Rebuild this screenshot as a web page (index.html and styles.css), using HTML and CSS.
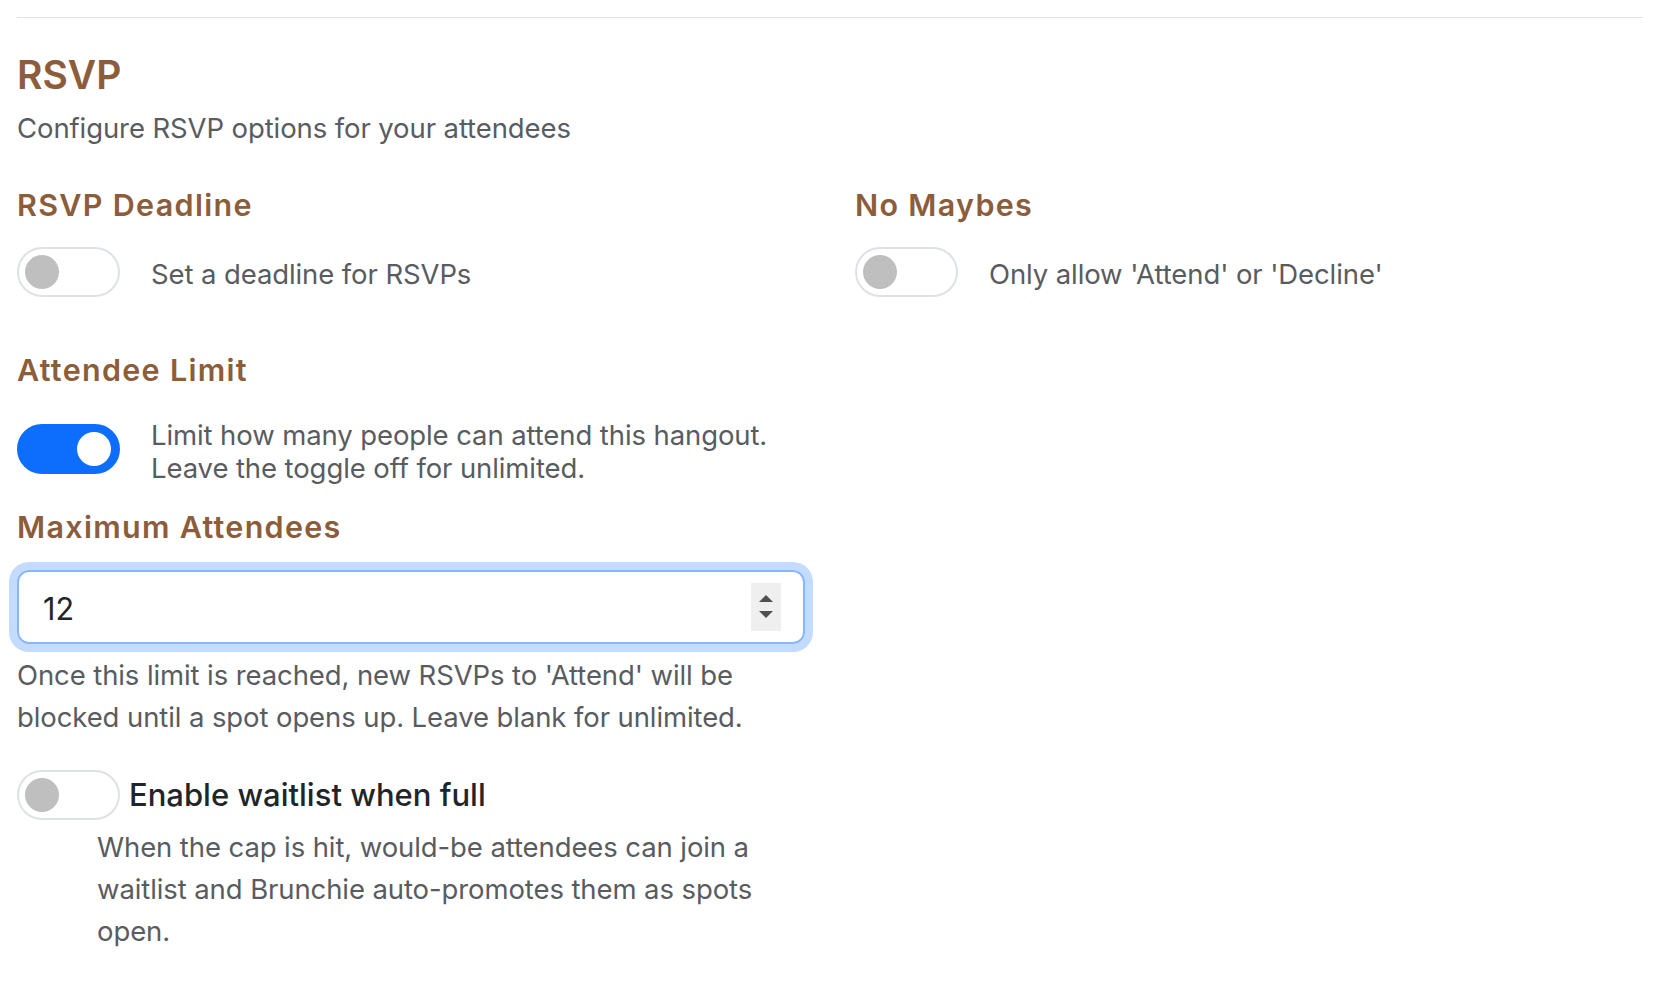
FILE: index.html
```html
<!DOCTYPE html>
<html lang="en">
<head>
  <meta charset="UTF-8">
  <title>RSVP Settings</title>
  <link rel="stylesheet" href="styles.css">
</head>
<body>
  <div class="page">
    <!-- SECTION RSVP -->
    <section class="rsvp-section">
      <h2 class="section-title">RSVP</h2>
      <p class="section-sub">Configure RSVP options for your attendees</p>

      <div class="options-grid">
        <div class="option">
          <h3 class="option-title">RSVP Deadline</h3>
          <div class="switch-row">
            <label class="switch">
              <input type="checkbox">
              <span class="slider"></span>
            </label>
            <span class="switch-text">Set a deadline for RSVPs</span>
          </div>
        </div>

        <div class="option">
          <h3 class="option-title">No Maybes</h3>
          <div class="switch-row">
            <label class="switch">
              <input type="checkbox">
              <span class="slider"></span>
            </label>
            <span class="switch-text">Only allow 'Attend' or 'Decline'</span>
          </div>
        </div>

        <!-- Attendee limit -->
        <div class="option option-limit">
          <h3 class="option-title">Attendee Limit</h3>
          <div class="switch-row switch-row-tall">
            <label class="switch">
              <input type="checkbox" checked>
              <span class="slider"></span>
            </label>
            <span class="switch-text">Limit how many people can attend this hangout. Leave the toggle off for unlimited.</span>
          </div>

          <h3 class="option-title max-title">Maximum Attendees</h3>
          <div class="number-field">
            <span class="number-value">12</span>
            <span class="spinner">
              <i class="spin-up"></i>
              <i class="spin-down"></i>
            </span>
          </div>
          <p class="field-help">Once this limit is reached, new RSVPs to 'Attend' will be blocked until a spot opens up. Leave blank for unlimited.</p>

          <div class="waitlist">
            <div class="waitlist-head">
              <label class="switch">
                <input type="checkbox">
                <span class="slider"></span>
              </label>
              <span class="waitlist-label">Enable waitlist when full</span>
            </div>
            <p class="waitlist-help">When the cap is hit, would-be attendees can join a waitlist and Brunchie auto-promotes them as spots open.</p>
          </div>
        </div>
      </div>
    </section>
    <!-- END SECTION -->
  </div>
</body>
</html>
```

FILE: styles.css
```css
body {
  margin: 0;
  font-family: Inter, "Noto Sans", Arial, sans-serif;
  background-color: #fff;
  color: #212529;
}

.page {
  padding: 17px 17px 0;
}

.rsvp-section {
  border-top: 1px solid #dee2e6;
}

.section-title {
  margin: 34px 0 0;
  font-size: 39px;
  line-height: 1.2;
  font-weight: 600;
  color: #8c5d3b;
}

.section-sub {
  margin: 9px 0 0;
  font-size: 27.5px;
  line-height: 1.5;
  letter-spacing: -0.1px;
  color: #595c5f;
}

.options-grid {
  margin-top: 38px;
  display: grid;
  grid-template-columns: 1fr 1fr;
  column-gap: 50px;
}

.option-title {
  margin: 0;
  font-size: 30.5px;
  line-height: 1.2;
  font-weight: 600;
  letter-spacing: 1.3px;
  color: #8c5d3b;
}

.switch-row {
  margin-top: 23px;
  display: flex;
  align-items: flex-start;
  gap: 31px;
}

.switch-text {
  margin-top: 7px;
  font-size: 27.5px;
  line-height: 1.5;
  letter-spacing: -0.1px;
  color: #595c5f;
}

/* Toggle switch */
.switch {
  display: block;
  flex: none;
}

.switch input {
  opacity: 0;
  width: 0;
  height: 0;
  margin: 0;
  position: absolute;
}

.slider {
  position: relative;
  display: block;
  box-sizing: border-box;
  width: 103px;
  height: 50px;
  border: 2px solid #dee2e6;
  border-radius: 25px;
  background-color: #fff;
}

.slider:before {
  position: absolute;
  content: "";
  width: 34px;
  height: 34px;
  left: 6px;
  top: 6px;
  border-radius: 50%;
  background-color: #bfbfbf;
}

input:checked + .slider {
  background-color: #0d6efd;
  border-color: #0d6efd;
}

input:checked + .slider:before {
  background-color: #fff;
  transform: translateX(52px);
}

/* Attendee limit */
.option-limit {
  grid-column: 1;
  margin-top: 55px;
}

.switch-row-tall {
  margin-top: 31px;
}

.switch-row-tall .switch {
  margin-top: 5px;
}

.switch-row-tall .switch-text {
  margin-top: 0;
  line-height: 33px;
}

.max-title {
  margin-top: 24px;
}

.number-field {
  margin-top: 24px;
  display: flex;
  align-items: center;
  justify-content: space-between;
  height: 74px;
  box-sizing: border-box;
  padding: 0 22px 0 24px;
  border: 2px solid #86b7fe;
  border-radius: 12px;
  box-shadow: 0 0 0 8px #c2dbfe;
  font-size: 30.5px;
  color: #212529;
}

.number-value {
  padding-top: 3px;
}

.spinner {
  display: flex;
  flex-direction: column;
  align-items: center;
  justify-content: center;
  gap: 9px;
  width: 30px;
  height: 48px;
  background-color: #efefef;
}

.spinner i {
  width: 0;
  height: 0;
  border-left: 7px solid transparent;
  border-right: 7px solid transparent;
}

.spin-up {
  border-bottom: 7px solid #505050;
}

.spin-down {
  border-top: 7px solid #505050;
}

.field-help {
  margin: 10px 0 0;
  font-size: 27.5px;
  line-height: 42px;
  letter-spacing: -0.1px;
  color: #595c5f;
}

/* Waitlist */
.waitlist {
  margin-top: 32px;
}

.waitlist-head {
  display: flex;
  align-items: center;
  gap: 9px;
}

.waitlist-label {
  font-size: 31px;
  line-height: 1.5;
  font-weight: 500;
  color: #212529;
}

.waitlist-help {
  margin: 6px 0 0;
  padding-left: 80px;
  font-size: 27.5px;
  line-height: 42px;
  letter-spacing: -0.1px;
  color: #595c5f;
}
```
